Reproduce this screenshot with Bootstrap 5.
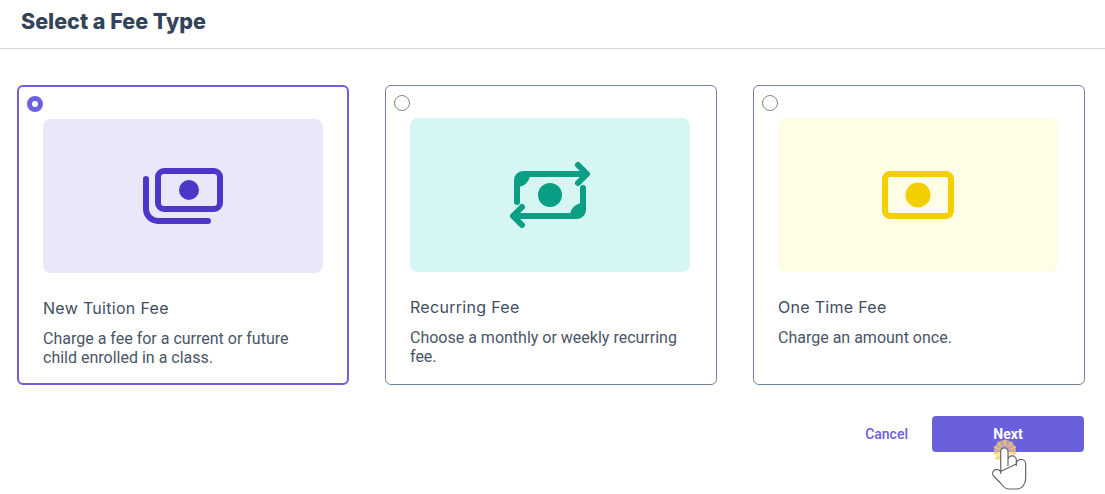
<!DOCTYPE html>
<html lang="en">
<head>
    <meta charset="UTF-8">
    <meta name="viewport" content="width=device-width, initial-scale=1.0">
    <title>Select a Fee Type</title>
    <link href="https://cdn.jsdelivr.net/npm/bootstrap@5.3.0/dist/css/bootstrap.min.css" rel="stylesheet">
    <style>
        body {
            background: #fff;
            font-family: Roboto, sans-serif;
            color: #3f4d63;
            position: relative;
            height: 494px;
            overflow: hidden;
        }
        .page-head {
            height: 49px;
            padding: 7px 21px 0;
            border-bottom: 1px solid #d4d6dd;
        }
        .page-title {
            font-family: Inter, sans-serif;
            font-size: 21.5px;
            font-weight: 800;
            line-height: 28px;
            color: #334359;
            margin: 0;
        }
        .fee-list {
            padding: 36px 0 0 17px;
            gap: 36px;
        }
        .fee-box {
            width: 332px;
            height: 300px;
            padding: 9px 0 0 8px;
            border: 1px solid #6f83a0;
            border-radius: 6px;
        }
        .fee-box.picked {
            border: 2px solid #6c60df;
        }
        .fee-radio {
            width: 16px;
            height: 16px;
            flex: none;
            border: 1px solid #7d8490;
            border-radius: 50%;
        }
        .picked .fee-radio {
            border: 5px solid #6c60df;
        }
        .fee-body {
            width: 280px;
            margin-top: 23px;
        }
        .fee-art {
            height: 154px;
            border-radius: 8px;
        }
        .art-purple { background: #e9e7fa; }
        .art-green { background: #d5f6f3; }
        .art-yellow { background: #fffde6; }
        .fee-name {
            font-family: Inter, sans-serif;
            font-size: 16px;
            font-weight: 400;
            letter-spacing: .3px;
            line-height: 22px;
            color: #3f4d63;
            margin: 24px 0 10px;
        }
        .fee-text {
            font-size: 16px;
            line-height: 19px;
            color: #4a5568;
            margin: 0;
        }
        .fee-actions {
            padding: 31px 21px 0 0;
            gap: 24px;
        }
        .cancel-link {
            font-size: 14px;
            font-weight: 500;
            color: #6c60df;
            text-decoration: none;
        }
        .next-btn {
            width: 152px;
            height: 36px;
            padding: 0;
            font-size: 14px;
            font-weight: 700;
            color: #fff;
            background: #6b60dc;
            border: 0;
            border-radius: 4px;
        }
        .hand-cursor {
            position: absolute;
            left: 985px;
            top: 435px;
        }
    </style>
</head>
<body>
    <div class="page-head">
        <h1 class="page-title">Select a Fee Type</h1>
    </div>

    <div class="d-flex fee-list">
        <!-- Tuition -->
        <div class="d-flex fee-box picked">
            <div class="fee-radio"></div>
            <div class="fee-body">
                <div class="d-flex align-items-center justify-content-center fee-art art-purple">
                    <svg width="100" height="70" viewBox="133 161 100 70" fill="none" stroke="#4b38c8" stroke-width="6" stroke-linecap="round">
                        <rect x="158" y="171" width="62" height="38" rx="6"/>
                        <path d="M146 179V209a12 12 0 0 0 12 12H208"/>
                        <circle cx="189" cy="190" r="10" fill="#4b38c8" stroke="none"/>
                    </svg>
                </div>
                <h2 class="fee-name">New Tuition Fee</h2>
                <p class="fee-text">Charge a fee for a current or future child enrolled in a class.</p>
            </div>
        </div>

        <!-- Recurring -->
        <div class="d-flex fee-box">
            <div class="fee-radio"></div>
            <div class="fee-body">
                <div class="d-flex align-items-center justify-content-center fee-art art-green">
                    <svg width="120" height="90" viewBox="490 150 120 90" fill="none" stroke="#0a9f84" stroke-width="6" stroke-linecap="round" stroke-linejoin="round">
                        <path d="M517 202V180a6 6 0 0 1 6-6H585"/>
                        <path d="M578 165L587 174L578 183"/>
                        <path d="M583 188V210a6 6 0 0 1-6 6H515"/>
                        <path d="M522 207L513 216L522 225"/>
                        <path d="M517 174H530a13 13 0 0 1-13 13Z" fill="#0a9f84" stroke="none"/>
                        <path d="M583 216H570a13 13 0 0 1 13-13Z" fill="#0a9f84" stroke="none"/>
                        <circle cx="550" cy="195" r="12" fill="#0a9f84" stroke="none"/>
                    </svg>
                </div>
                <h2 class="fee-name">Recurring Fee</h2>
                <p class="fee-text">Choose a monthly or weekly recurring fee.</p>
            </div>
        </div>

        <!-- One time -->
        <div class="d-flex fee-box">
            <div class="fee-radio"></div>
            <div class="fee-body">
                <div class="d-flex align-items-center justify-content-center fee-art art-yellow">
                    <svg width="100" height="70" viewBox="868 160 100 70" fill="none" stroke="#f3cf00" stroke-width="6">
                        <rect x="885" y="174" width="66" height="42" rx="5"/>
                        <circle cx="918" cy="195" r="12.5" fill="#f3cf00" stroke="none"/>
                    </svg>
                </div>
                <h2 class="fee-name">One Time Fee</h2>
                <p class="fee-text">Charge an amount once.</p>
            </div>
        </div>
    </div>

    <div class="d-flex justify-content-end align-items-center fee-actions">
        <a href="#" class="cancel-link">Cancel</a>
        <button type="button" class="btn next-btn">Next</button>
    </div>

    <svg class="hand-cursor" width="50" height="59" viewBox="985 435 50 59" fill="none">
        <circle cx="1005" cy="451" r="11" fill="#fbd98f" fill-opacity=".6"/>
        <g stroke="#fcc65a" stroke-width="1.4" stroke-linecap="round">
            <path d="M1005 440V445M998 442L1000.5 446M1012 442L1009.5 446M994.5 447L999 449M1015.5 447L1011 449M994 453H998M1016 453H1012M996 459L999 457M1014 459L1011 457"/>
        </g>
        <path d="M1000.7 474V451.5a3.65 3.65 0 0 1 7.3 0V466M1008 460a4 4 0 0 1 8.3 0V466M1016.3 464a4.7 4.7 0 0 1 9.4 0V478c0 6-3.5 11-9 11H1009c-4 0-6-2.5-8-5.5L993.5 476c-1.5-2-1-4.5 1-6 2-1.3 4-.8 6.2 1.5Z" fill="#fff" fill-opacity=".92" stroke="#62656b" stroke-width="1.2" stroke-linejoin="round"/>
    </svg>

    <script src="https://cdn.jsdelivr.net/npm/bootstrap@5.3.0/dist/js/bootstrap.bundle.min.js"></script>
</body>
</html>
